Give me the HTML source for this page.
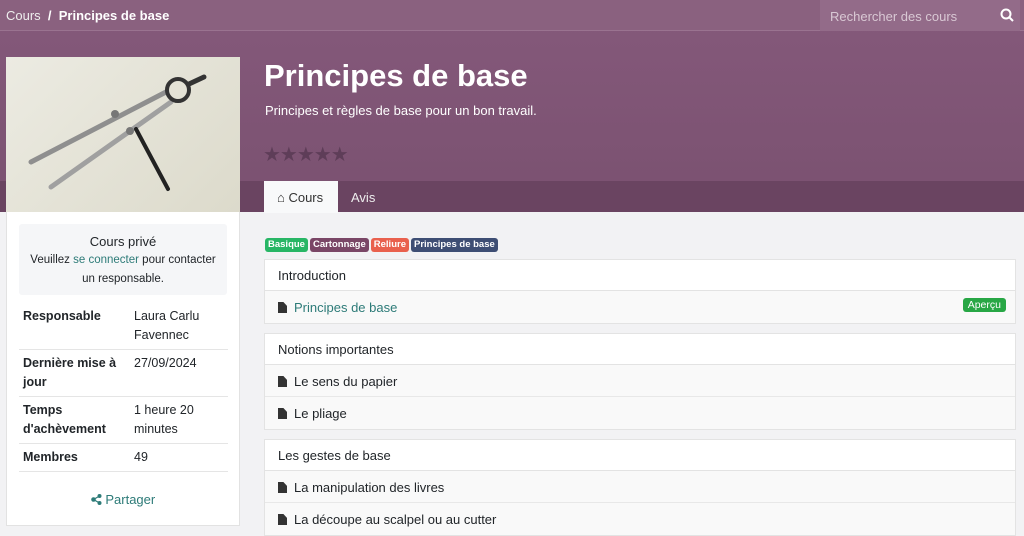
<!DOCTYPE html><html><head><meta charset="utf-8"><style>
*{box-sizing:border-box;margin:0;padding:0}
body{width:1024px;height:534px;overflow:hidden;font-family:"Liberation Sans",sans-serif;font-size:13px;color:#212529;background:#f2f2f4;position:relative}
.hero{position:absolute;left:0;top:0;width:1024px;height:212px;background:linear-gradient(#85597b,#7a5170)}
.top{position:absolute;left:0;top:0;width:1024px;height:31px;background:#8a617f;border-bottom:1px solid #9a7390}
.bc{position:absolute;left:6px;top:8px;color:#eee;font-size:13px}
.bc b{color:#fff}
.search{position:absolute;left:820px;top:0;width:200px;height:31px;background:#936b89;color:#d9c8d4;padding:9px 10px;font-size:13px}
.tabbar{position:absolute;left:0;top:181px;width:1024px;height:31px;background:#6a4461}
.img{position:absolute;left:6px;top:57px;width:234px;height:156px;background:linear-gradient(135deg,#ecebe2,#dcdacb)}
h1{position:absolute;left:264px;top:58px;color:#fff;font-size:31px;font-weight:bold}
.sub{position:absolute;left:265px;top:103px;color:#fff;font-size:13px}
.stars{position:absolute;left:263px;top:142px;color:#5e3d58;font-size:20px;letter-spacing:-1px}
.tab{position:absolute;top:181px;height:32px;padding:9px 13px;font-size:13px;color:#eee}
.tab.a{left:264px;background:#f8f9fa;color:#333;width:74px}
.card{position:absolute;left:6px;top:212px;width:234px;height:314px;background:#fff;border:1px solid #e2e2e2;border-top:none}
.priv{margin:12px 12px 0;background:#f5f6f8;border-radius:3px;text-align:center;font-size:11.5px;line-height:19px;padding:8px 4px 6px}
.priv .t{font-size:13px}
a{color:#2d7b78;text-decoration:none}
table{margin:8px 12px 0;width:209px;border-collapse:collapse;font-size:12.5px;line-height:19px}
td{padding:4px 4px;vertical-align:top;border-bottom:1px solid #e5e5e5}
td:first-child{font-weight:bold;width:111px}
.share{text-align:center;margin-top:20px;font-size:13px}
.tags{position:absolute;left:265px;top:238px;font-size:9.5px;font-weight:bold;color:#fff}
.tags span{display:inline-block;padding:1px 3px;border-radius:3px;margin-right:2px;line-height:12px}
.sec{position:absolute;left:264px;width:752px;border:1px solid #e3e3e3}
.h{background:#fff;height:31px;padding:8px 13px;border-bottom:1px solid #e3e3e3}
.r{background:#f9f9f9;height:32px;padding:9px 13px;border-bottom:1px solid #e8e8e8;position:relative}
.r:last-child{border-bottom:none}
.ic{display:inline-block;width:9px;height:11px;background:#333;margin-right:7px;vertical-align:-1px;clip-path:polygon(0 0,60% 0,100% 35%,100% 100%,0 100%)}
.ap{position:absolute;right:9px;top:7px;background:#28a745;color:#fff;font-size:10.5px;padding:1px 5px;border-radius:3px}
</style></head><body>
<div class="hero"></div>
<div class="top"></div>
<div class="bc">Cours &nbsp;<b>/ &nbsp;Principes de base</b></div>
<div class="search">Rechercher des cours<svg style="position:absolute;right:6px;top:8px" width="14" height="14"><circle cx="6" cy="6" r="4.5" fill="none" stroke="#fff" stroke-width="2"/><line x1="9.5" y1="9.5" x2="13" y2="13" stroke="#fff" stroke-width="2"/></svg></div>
<div class="tabbar"></div>
<div class="img"><svg width="234" height="156"><g stroke-linecap="round"><line x1="25" y1="105" x2="160" y2="35" stroke="#8f8f8f" stroke-width="5"/><line x1="45" y1="130" x2="165" y2="45" stroke="#a0a0a0" stroke-width="5"/><line x1="130" y1="72" x2="162" y2="132" stroke="#222" stroke-width="4"/><circle cx="172" cy="33" r="11" fill="none" stroke="#333" stroke-width="4"/><line x1="183" y1="27" x2="198" y2="20" stroke="#333" stroke-width="5"/><circle cx="109" cy="57" r="4" fill="#777"/><circle cx="124" cy="74" r="4" fill="#777"/></g></svg></div>
<h1>Principes de base</h1>
<div class="sub">Principes et règles de base pour un bon travail.</div>
<div class="stars">★★★★★</div>
<div class="tab a">&#8962; Cours</div>
<div class="tab" style="left:338px">Avis</div>
<div class="card">
<div class="priv"><div class="t">Cours privé</div>Veuillez <a>se connecter</a> pour contacter un responsable.</div>
<table>
<tr><td>Responsable</td><td>Laura Carlu Favennec</td></tr>
<tr><td>Dernière mise à jour</td><td>27/09/2024</td></tr>
<tr><td>Temps d'achèvement</td><td>1 heure 20 minutes</td></tr>
<tr><td>Membres</td><td>49</td></tr>
</table>
<div class="share"><a><svg width="11" height="11" style="vertical-align:-1px"><circle cx="2.5" cy="5.5" r="2.3" fill="#2d7b78"/><circle cx="8.5" cy="2" r="2" fill="#2d7b78"/><circle cx="8.5" cy="9" r="2" fill="#2d7b78"/><path d="M2.5 5.5L8.5 2M2.5 5.5L8.5 9" stroke="#2d7b78" stroke-width="1.3"/></svg> Partager</a></div>
</div>
<div class="tags"><span style="background:#28b665">Basique</span><span style="background:#7a4666">Cartonnage</span><span style="background:#e9604d">Reliure</span><span style="background:#3e4e74">Principes de base</span></div>
<div class="sec" style="top:259px"><div class="h">Introduction</div><div class="r"><span class="ic"></span><a>Principes de base</a><span class="ap">Aperçu</span></div></div>
<div class="sec" style="top:333px"><div class="h">Notions importantes</div><div class="r"><span class="ic"></span>Le sens du papier</div><div class="r"><span class="ic"></span>Le pliage</div></div>
<div class="sec" style="top:439px"><div class="h">Les gestes de base</div><div class="r"><span class="ic"></span>La manipulation des livres</div><div class="r"><span class="ic"></span>La découpe au scalpel ou au cutter</div></div>
</body></html>
